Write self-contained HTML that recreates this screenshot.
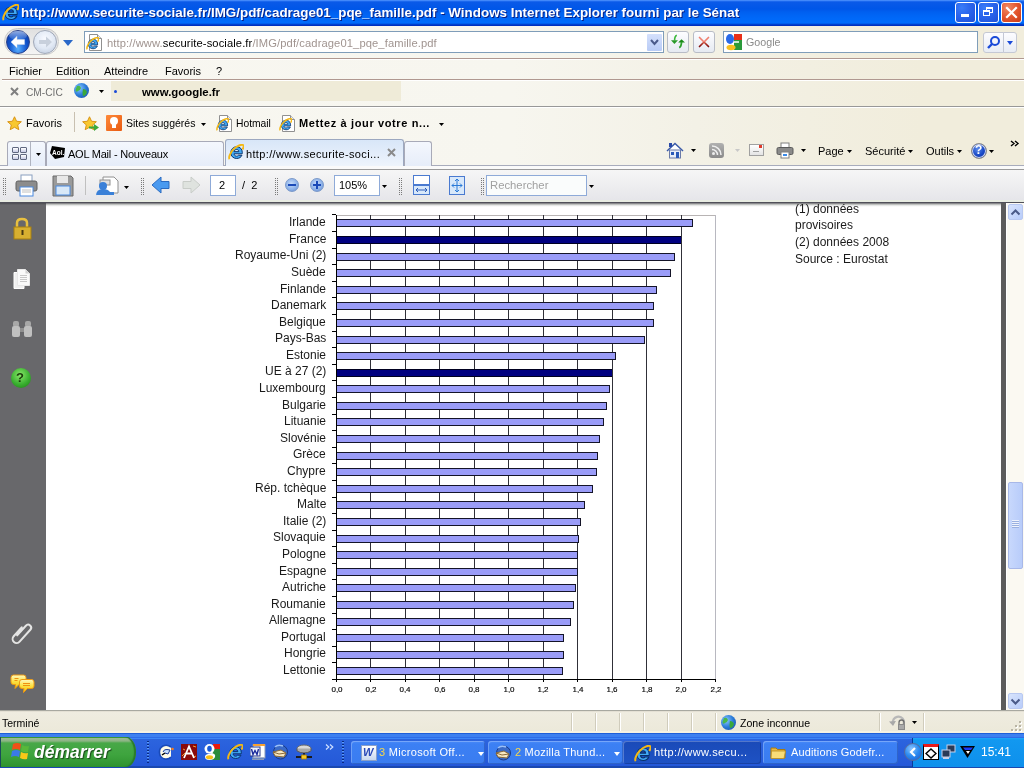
<!DOCTYPE html>
<html><head><meta charset="utf-8"><style>
*{margin:0;padding:0;box-sizing:border-box}
html,body{width:1024px;height:768px;overflow:hidden;background:#fff;font-family:"Liberation Sans",sans-serif;position:relative}
.t,.cl,.al,.note{will-change:transform}
.a{position:absolute}
.t{position:absolute;white-space:nowrap;font-size:11px;color:#000;line-height:13px}
.cl{position:absolute;right:698px;font-size:12px;line-height:16px;color:#1a1a1a;white-space:nowrap;text-align:right}
.al{position:absolute;top:685px;width:30px;text-align:center;font-size:8px;line-height:10px;color:#000;-webkit-text-stroke:0.15px #000}
.note{position:absolute;left:795px;font-size:12px;line-height:16px;color:#1a1a1a;white-space:nowrap}
</style></head><body>
<!-- title bar -->
<div class="a" style="left:0;top:0;width:1024px;height:26px;background:linear-gradient(#5a9cff 0,#2a74f4 1px,#0a5ae8 2px,#0056e8 9px,#0060f0 12px,#0068f8 18px,#006cfc 23px,#0050dc 24px,#0030c0 25px,#0030c0 26px)"></div>
<div class="t" style="left:21px;top:5px;font-size:13.4px;line-height:16px;font-weight:bold;color:#fff;text-shadow:1px 1px 0 #0a1e80">http://www.securite-sociale.fr/IMG/pdf/cadrage01_pqe_famille.pdf - Windows Internet Explorer fourni par le Sénat</div>
<!-- address row -->
<div class="a" style="left:0;top:26px;width:1024px;height:140px;background:linear-gradient(90deg,#f8f7f1 0,#f7f6ef 50%,#f3f1e6 68%,#f1eddc 90%,#f1eddc 100%)"></div>
<div class="a" style="left:0;top:58px;width:1024px;height:1px;background:#b09890"></div><div class="a" style="left:0;top:59px;width:1024px;height:1px;background:#fff"></div>
<!-- menu row -->

<div class="a" style="left:2px;top:79px;width:1022px;height:1px;background:#b09890"></div><div class="a" style="left:2px;top:80px;width:1022px;height:1px;background:#fff"></div>
<!-- links row -->

<div class="a" style="left:111px;top:81px;width:290px;height:20px;background:#efebd8"></div>
<div class="a" style="left:0;top:106px;width:1024px;height:1px;background:#989898"></div><div class="a" style="left:0;top:107px;width:1024px;height:1px;background:#fff"></div>
<!-- favorites + tabs row -->

<div class="a" style="left:0;top:165px;width:1024px;height:1px;background:#a8acbc"></div>
<div class="a" style="left:0;top:166px;width:1024px;height:3px;background:#fafafa"></div>
<div class="a" style="left:0;top:169px;width:1024px;height:1px;background:#9a9a9a"></div>
<!-- reader toolbar -->
<div class="a" style="left:0;top:170px;width:1024px;height:30px;background:linear-gradient(#f6f6f6,#e6e6ea)"></div><div class="a" style="left:0;top:200px;width:1024px;height:2px;background:#e8ece2"></div>
<div class="a" style="left:0;top:202px;width:1024px;height:1px;background:#505058"></div>
<!-- content -->
<div class="a" style="left:0;top:203px;width:46px;height:507px;background:linear-gradient(#4a4a50 0,#5a5a5e 1px,#68686b 2px)"></div>
<div class="a" style="left:46px;top:203px;width:955px;height:507px;background:linear-gradient(#6a6a70 0,#a8a8a8 1px,#d8dcd8 2px,#f4f4f4 3px,#fff 4px)"></div>
<div class="a" style="left:1001px;top:203px;width:5px;height:507px;background:#5c5c5c"></div>
<div class="a" style="left:1006px;top:203px;width:18px;height:507px;background:linear-gradient(90deg,#fff 0,#fff 1px,#fbf9f2 1px)"></div>
<!-- status bar -->
<div class="a" style="left:0;top:710px;width:1024px;height:23px;background:linear-gradient(#a8a8a0 0,#a8a8a0 1px,#e4e0d4 1px,#e4e0d4 2px,#efece0 2px,#ece9da 21px,#f6f2e2 21px)"></div>
<!-- taskbar -->
<div class="a" style="left:0;top:733px;width:1024px;height:35px;background:linear-gradient(#1f5fd8 0,#1f5fd8 1px,#3d80f0 1px,#3d80f0 4px,#2e6ce8 4px,#2e6ce8 5px,#3c86f6 5px,#3c86f6 6px,#2c64de 6px,#2458d8 33px,#1a48b0 33px)"></div>
<svg width="1024" height="768" style="position:absolute;left:0;top:0" shape-rendering="crispEdges">
<rect x="336" y="215" width="380" height="1" fill="#b8b4b4"/>
<rect x="715" y="215" width="1" height="465" fill="#b8b8c0"/>
<rect x="370" y="215" width="1" height="465" fill="#303038"/>
<rect x="405" y="215" width="1" height="465" fill="#303038"/>
<rect x="439" y="215" width="1" height="465" fill="#303038"/>
<rect x="474" y="215" width="1" height="465" fill="#303038"/>
<rect x="508" y="215" width="1" height="465" fill="#303038"/>
<rect x="543" y="215" width="1" height="465" fill="#303038"/>
<rect x="577" y="215" width="1" height="465" fill="#303038"/>
<rect x="612" y="215" width="1" height="465" fill="#303038"/>
<rect x="646" y="215" width="1" height="465" fill="#303038"/>
<rect x="681" y="215" width="1" height="465" fill="#303038"/>
<rect x="336" y="219" width="357" height="8" fill="#141428"/>
<rect x="337" y="220" width="355" height="6" fill="#9a9cf8"/>
<rect x="336" y="236" width="345" height="8" fill="#000080"/>
<rect x="336" y="236" width="345" height="1" fill="#000020"/>
<rect x="336" y="243" width="345" height="1" fill="#000020"/>
<rect x="336" y="253" width="339" height="8" fill="#141428"/>
<rect x="337" y="254" width="337" height="6" fill="#9a9cf8"/>
<rect x="336" y="269" width="335" height="8" fill="#141428"/>
<rect x="337" y="270" width="333" height="6" fill="#9a9cf8"/>
<rect x="336" y="286" width="321" height="8" fill="#141428"/>
<rect x="337" y="287" width="319" height="6" fill="#9a9cf8"/>
<rect x="336" y="302" width="318" height="8" fill="#141428"/>
<rect x="337" y="303" width="316" height="6" fill="#9a9cf8"/>
<rect x="336" y="319" width="318" height="8" fill="#141428"/>
<rect x="337" y="320" width="316" height="6" fill="#9a9cf8"/>
<rect x="336" y="336" width="309" height="8" fill="#141428"/>
<rect x="337" y="337" width="307" height="6" fill="#9a9cf8"/>
<rect x="336" y="352" width="280" height="8" fill="#141428"/>
<rect x="337" y="353" width="278" height="6" fill="#9a9cf8"/>
<rect x="336" y="369" width="276" height="8" fill="#000080"/>
<rect x="336" y="369" width="276" height="1" fill="#000020"/>
<rect x="336" y="376" width="276" height="1" fill="#000020"/>
<rect x="336" y="385" width="274" height="8" fill="#141428"/>
<rect x="337" y="386" width="272" height="6" fill="#9a9cf8"/>
<rect x="336" y="402" width="271" height="8" fill="#141428"/>
<rect x="337" y="403" width="269" height="6" fill="#9a9cf8"/>
<rect x="336" y="418" width="268" height="8" fill="#141428"/>
<rect x="337" y="419" width="266" height="6" fill="#9a9cf8"/>
<rect x="336" y="435" width="264" height="8" fill="#141428"/>
<rect x="337" y="436" width="262" height="6" fill="#9a9cf8"/>
<rect x="336" y="452" width="262" height="8" fill="#141428"/>
<rect x="337" y="453" width="260" height="6" fill="#9a9cf8"/>
<rect x="336" y="468" width="261" height="8" fill="#141428"/>
<rect x="337" y="469" width="259" height="6" fill="#9a9cf8"/>
<rect x="336" y="485" width="257" height="8" fill="#141428"/>
<rect x="337" y="486" width="255" height="6" fill="#9a9cf8"/>
<rect x="336" y="501" width="249" height="8" fill="#141428"/>
<rect x="337" y="502" width="247" height="6" fill="#9a9cf8"/>
<rect x="336" y="518" width="245" height="8" fill="#141428"/>
<rect x="337" y="519" width="243" height="6" fill="#9a9cf8"/>
<rect x="336" y="535" width="243" height="8" fill="#141428"/>
<rect x="337" y="536" width="241" height="6" fill="#9a9cf8"/>
<rect x="336" y="551" width="242" height="8" fill="#141428"/>
<rect x="337" y="552" width="240" height="6" fill="#9a9cf8"/>
<rect x="336" y="568" width="242" height="8" fill="#141428"/>
<rect x="337" y="569" width="240" height="6" fill="#9a9cf8"/>
<rect x="336" y="584" width="240" height="8" fill="#141428"/>
<rect x="337" y="585" width="238" height="6" fill="#9a9cf8"/>
<rect x="336" y="601" width="238" height="8" fill="#141428"/>
<rect x="337" y="602" width="236" height="6" fill="#9a9cf8"/>
<rect x="336" y="618" width="235" height="8" fill="#141428"/>
<rect x="337" y="619" width="233" height="6" fill="#9a9cf8"/>
<rect x="336" y="634" width="228" height="8" fill="#141428"/>
<rect x="337" y="635" width="226" height="6" fill="#9a9cf8"/>
<rect x="336" y="651" width="228" height="8" fill="#141428"/>
<rect x="337" y="652" width="226" height="6" fill="#9a9cf8"/>
<rect x="336" y="667" width="227" height="8" fill="#141428"/>
<rect x="337" y="668" width="225" height="6" fill="#9a9cf8"/>
<rect x="332" y="214" width="4" height="1" fill="#000"/>
<rect x="332" y="231" width="4" height="1" fill="#000"/>
<rect x="332" y="248" width="4" height="1" fill="#000"/>
<rect x="332" y="264" width="4" height="1" fill="#000"/>
<rect x="332" y="281" width="4" height="1" fill="#000"/>
<rect x="332" y="297" width="4" height="1" fill="#000"/>
<rect x="332" y="314" width="4" height="1" fill="#000"/>
<rect x="332" y="331" width="4" height="1" fill="#000"/>
<rect x="332" y="347" width="4" height="1" fill="#000"/>
<rect x="332" y="364" width="4" height="1" fill="#000"/>
<rect x="332" y="380" width="4" height="1" fill="#000"/>
<rect x="332" y="397" width="4" height="1" fill="#000"/>
<rect x="332" y="414" width="4" height="1" fill="#000"/>
<rect x="332" y="430" width="4" height="1" fill="#000"/>
<rect x="332" y="447" width="4" height="1" fill="#000"/>
<rect x="332" y="463" width="4" height="1" fill="#000"/>
<rect x="332" y="480" width="4" height="1" fill="#000"/>
<rect x="332" y="497" width="4" height="1" fill="#000"/>
<rect x="332" y="513" width="4" height="1" fill="#000"/>
<rect x="332" y="530" width="4" height="1" fill="#000"/>
<rect x="332" y="546" width="4" height="1" fill="#000"/>
<rect x="332" y="563" width="4" height="1" fill="#000"/>
<rect x="332" y="579" width="4" height="1" fill="#000"/>
<rect x="332" y="596" width="4" height="1" fill="#000"/>
<rect x="332" y="613" width="4" height="1" fill="#000"/>
<rect x="332" y="629" width="4" height="1" fill="#000"/>
<rect x="332" y="646" width="4" height="1" fill="#000"/>
<rect x="332" y="662" width="4" height="1" fill="#000"/>
<rect x="332" y="679" width="4" height="1" fill="#000"/>
<rect x="336" y="215" width="1" height="467" fill="#000"/>
<rect x="332" y="679" width="384" height="1" fill="#000"/>
<rect x="336" y="679" width="1" height="3" fill="#000"/>
<rect x="370" y="679" width="1" height="3" fill="#000"/>
<rect x="405" y="679" width="1" height="3" fill="#000"/>
<rect x="439" y="679" width="1" height="3" fill="#000"/>
<rect x="474" y="679" width="1" height="3" fill="#000"/>
<rect x="508" y="679" width="1" height="3" fill="#000"/>
<rect x="543" y="679" width="1" height="3" fill="#000"/>
<rect x="577" y="679" width="1" height="3" fill="#000"/>
<rect x="612" y="679" width="1" height="3" fill="#000"/>
<rect x="646" y="679" width="1" height="3" fill="#000"/>
<rect x="681" y="679" width="1" height="3" fill="#000"/>
<rect x="715" y="679" width="1" height="3" fill="#000"/>
</svg>
<div class="cl" style="top:214.1px">Irlande</div>
<div class="cl" style="top:230.7px">France</div>
<div class="cl" style="top:247.3px">Royaume-Uni (2)</div>
<div class="cl" style="top:263.9px">Suède</div>
<div class="cl" style="top:280.5px">Finlande</div>
<div class="cl" style="top:297.0px">Danemark</div>
<div class="cl" style="top:313.6px">Belgique</div>
<div class="cl" style="top:330.2px">Pays-Bas</div>
<div class="cl" style="top:346.8px">Estonie</div>
<div class="cl" style="top:363.4px">UE à 27 (2)</div>
<div class="cl" style="top:380.0px">Luxembourg</div>
<div class="cl" style="top:396.6px">Bulgarie</div>
<div class="cl" style="top:413.2px">Lituanie</div>
<div class="cl" style="top:429.8px">Slovénie</div>
<div class="cl" style="top:446.3px">Grèce</div>
<div class="cl" style="top:462.9px">Chypre</div>
<div class="cl" style="top:479.5px">Rép. tchèque</div>
<div class="cl" style="top:496.1px">Malte</div>
<div class="cl" style="top:512.7px">Italie (2)</div>
<div class="cl" style="top:529.3px">Slovaquie</div>
<div class="cl" style="top:545.9px">Pologne</div>
<div class="cl" style="top:562.5px">Espagne</div>
<div class="cl" style="top:579.1px">Autriche</div>
<div class="cl" style="top:595.6px">Roumanie</div>
<div class="cl" style="top:612.2px">Allemagne</div>
<div class="cl" style="top:628.8px">Portugal</div>
<div class="cl" style="top:645.4px">Hongrie</div>
<div class="cl" style="top:662.0px">Lettonie</div>
<div class="al" style="left:321.5px">0,0</div>
<div class="al" style="left:356.0px">0,2</div>
<div class="al" style="left:390.4px">0,4</div>
<div class="al" style="left:424.9px">0,6</div>
<div class="al" style="left:459.3px">0,8</div>
<div class="al" style="left:493.8px">1,0</div>
<div class="al" style="left:528.3px">1,2</div>
<div class="al" style="left:562.7px">1,4</div>
<div class="al" style="left:597.2px">1,6</div>
<div class="al" style="left:631.6px">1,8</div>
<div class="al" style="left:666.1px">2,0</div>
<div class="al" style="left:700.6px">2,2</div>
<svg class="a" style="left:2px;top:4px" width="17" height="17" viewBox="0 0 16 16">
<g transform="translate(8.8 8.6) scale(1.2) translate(-8.2 -8.5)"><path d="M8.2 3.6c-2.9 0-5 2.1-5 5 0 2.8 2 4.8 4.9 4.8 2.1 0 3.7-1 4.4-2.7H9.6c-.4.5-.9.8-1.6.8-1.1 0-1.9-.8-2.1-2h6.8c.1-.3.1-.7.1-1 0-2.9-1.9-4.9-4.6-4.9zM5.9 7.7c.2-1.1 1-1.8 2.1-1.8s1.8.7 1.9 1.8z" fill="#40a8f4" stroke="#08306a" stroke-width=".8"/></g>
<path d="M1.6 15.2C.4 13.8 1.8 9 5.6 5.2 9.6 1.2 14.2 0 15.2 1.2 16 2.2 15.4 4 14.4 5.6" fill="none" stroke="#f4b814" stroke-width="1.9"/>
</svg>
<div class="a" style="left:955px;top:2px;width:21px;height:21px;border:1px solid #fff;border-radius:3px;background:radial-gradient(circle at 30% 25%,#3a7cf8 0,#2a64ec 45%,#1c50d8 100%)"></div>
<div class="a" style="left:978px;top:2px;width:21px;height:21px;border:1px solid #fff;border-radius:3px;background:radial-gradient(circle at 30% 25%,#3a7cf8 0,#2a64ec 45%,#1c50d8 100%)"></div>
<div class="a" style="left:1001px;top:2px;width:21px;height:21px;border:1px solid #fff;border-radius:3px;background:radial-gradient(circle at 30% 25%,#f08a66 0,#e4562e 50%,#c83c18 100%)"></div>
<div class="a" style="left:961px;top:14px;width:8px;height:3px;background:#fff"></div>
<div class="a" style="left:986px;top:7px;width:7px;height:6px;border:1px solid #fff;border-top-width:2px"></div>
<div class="a" style="left:983px;top:10px;width:7px;height:6px;border:1px solid #fff;border-top-width:2px;background:#2a64ec"></div>
<svg class="a" style="left:1005px;top:6px" width="13" height="13"><path d="M2 2L11 11M11 2L2 11" stroke="#fff" stroke-width="2.2" stroke-linecap="square"/></svg>
<div class="a" style="left:4px;top:28px;width:55px;height:27px;border-radius:14px;background:linear-gradient(#e0e0e0,#f4f4f4);border:1px solid #c8c8c8"></div>
<div class="a" style="left:6px;top:30px;width:24px;height:24px;border-radius:50%;background:radial-gradient(ellipse at 50% 80%,#5ab0ff 0,#2a74e0 35%,#1050c8 60%,#0a3aa0 100%);border:1px solid #28408a"></div>
<div class="a" style="left:9px;top:31px;width:18px;height:9px;border-radius:50%;background:linear-gradient(rgba(255,255,255,.55),rgba(255,255,255,.05))"></div>
<svg class="a" style="left:10px;top:35px" width="16" height="14"><path d="M1 7L7 1.2V4.6H14.5V9.4H7V12.8Z" fill="#fff" stroke="#d0d8e8" stroke-width=".5"/></svg>
<div class="a" style="left:33px;top:30px;width:24px;height:24px;border-radius:50%;background:radial-gradient(circle at 50% 35%,#f8faff 0,#e0e8f4 55%,#b8c4d8 100%);border:1px solid #a0a8b8"></div>
<svg class="a" style="left:37px;top:35px" width="16" height="14"><path d="M15 7L9 1.5V5H2V9H9V12.5Z" fill="#c8d0dc"/></svg>
<svg class="a" style="left:63px;top:40px" width="10" height="6"><path d="M0 0h10L5 6z" fill="#2a68c8"/></svg>
<div class="a" style="left:84px;top:31px;width:580px;height:22px;background:#fff;border:1px solid #7f9db9"></div>
<svg class="a" style="left:88px;top:34px" width="14" height="17"><path d="M1.5 .5H9.5L13.5 4.5V16.5H1.5z" fill="#fff" stroke="#909090"/><path d="M9.5 .5V4.5H13.5" fill="#e8e8e8" stroke="#909090"/></svg><svg class="a" style="left:86px;top:37px" width="13" height="13" viewBox="0 0 16 16">
<g transform="translate(8.8 8.6) scale(1.2) translate(-8.2 -8.5)"><path d="M8.2 3.6c-2.9 0-5 2.1-5 5 0 2.8 2 4.8 4.9 4.8 2.1 0 3.7-1 4.4-2.7H9.6c-.4.5-.9.8-1.6.8-1.1 0-1.9-.8-2.1-2h6.8c.1-.3.1-.7.1-1 0-2.9-1.9-4.9-4.6-4.9zM5.9 7.7c.2-1.1 1-1.8 2.1-1.8s1.8.7 1.9 1.8z" fill="#40a8f4" stroke="#08306a" stroke-width=".8"/></g>
<path d="M1.6 15.2C.4 13.8 1.8 9 5.6 5.2 9.6 1.2 14.2 0 15.2 1.2 16 2.2 15.4 4 14.4 5.6" fill="none" stroke="#f4b814" stroke-width="1.9"/>
</svg>
<div class="t" style="left:107px;top:37px;font-size:11.2px;letter-spacing:0.1px;color:#a09490">http://www.<span style="color:#000">securite-sociale.fr</span>/IMG/pdf/cadrage01_pqe_famille.pdf</div>
<div class="a" style="left:647px;top:34px;width:15px;height:17px;background:linear-gradient(#d4e0fc,#b8cbf6);border-radius:1px"></div>
<svg class="a" style="left:650px;top:39px" width="9" height="7"><path d="M1 1L4.5 5L8 1" stroke="#4a5a8a" stroke-width="2" fill="none"/></svg>
<div class="a" style="left:667px;top:31px;width:22px;height:22px;border:1px solid #b8bcc6;border-radius:3px;background:linear-gradient(#fdfdff,#e6eaf2)"></div>
<div class="a" style="left:693px;top:31px;width:22px;height:22px;border:1px solid #b8bcc6;border-radius:3px;background:linear-gradient(#fdfdff,#e6eaf2)"></div>
<svg class="a" style="left:670px;top:34px" width="16" height="16"><path d="M6.8 1.2Q4.6 2 4.6 6.5" stroke="#3ab83a" stroke-width="1.6" fill="none"/><path d="M1 6.3H8L4.4 10z" fill="#2a9a2a"/><path d="M8.2 8.6H15L11.5 5.2z" fill="#1a8a1a"/><path d="M11.5 8Q11.4 12.6 9.2 13.6" stroke="#2aa02a" stroke-width="1.8" fill="none"/></svg>
<svg class="a" style="left:698px;top:36px" width="12" height="12"><defs><linearGradient id="stg" x1="0" y1="0" x2="0" y2="1"><stop offset=".45" stop-color="#f08070"/><stop offset=".6" stop-color="#c04030"/><stop offset="1" stop-color="#801010"/></linearGradient></defs><path d="M1.5 1.5L10.5 10.5M10.5 1.5L1.5 10.5" stroke="url(#stg)" stroke-width="1.7" stroke-linecap="round"/></svg>
<div class="a" style="left:723px;top:31px;width:255px;height:22px;background:#fff;border:1px solid #7f9db9"></div>
<svg class="a" style="left:725px;top:33px" width="18" height="18"><rect x="9" y="1" width="8" height="7" fill="#e8301a"/><rect x="9" y="7" width="8" height="10" fill="#2a9a3a"/><ellipse cx="5" cy="6" rx="4" ry="5" fill="#2a6ae8"/><ellipse cx="6" cy="14.5" rx="4.5" ry="2.8" fill="#f8c020"/><path d="M9 9h5" stroke="#fff" stroke-width="1.5"/></svg>
<div class="t" style="left:746px;top:36px;font-size:10.7px;color:#8a8a8a">Google</div>
<div class="a" style="left:983px;top:32px;width:21px;height:21px;border:1px solid #c4c8d4;border-radius:3px 0 0 3px;background:linear-gradient(#fcfcff,#e8ecf4)"></div>
<div class="a" style="left:1003px;top:32px;width:14px;height:21px;border:1px solid #c4c8d4;border-radius:0 3px 3px 0;background:linear-gradient(#fcfcff,#e8ecf4)"></div>
<svg class="a" style="left:986px;top:35px" width="15" height="15"><circle cx="9" cy="6" r="4" stroke="#1a4ad8" stroke-width="2" fill="none"/><path d="M6 9L2 13" stroke="#1a4ad8" stroke-width="2.4"/></svg>
<svg class="a" style="left:1007px;top:41px" width="6" height="4"><path d="M0 0h6L3 4z" fill="#1a4ad8"/></svg>
<div class="t" style="left:9px;top:65px;font-size:11px">Fichier</div>
<div class="t" style="left:56px;top:65px;font-size:11px">Edition</div>
<div class="t" style="left:104px;top:65px;font-size:11px">Atteindre</div>
<div class="t" style="left:165px;top:65px;font-size:11px">Favoris</div>
<div class="t" style="left:216px;top:65px;font-size:11px">?</div>
<svg class="a" style="left:10px;top:87px" width="9" height="9"><path d="M1 1L8 8M8 1L1 8" stroke="#808080" stroke-width="2"/></svg>
<div class="t" style="left:26px;top:86px;font-size:10.2px;color:#707070">CM-CIC</div>
<div class="a" style="left:74px;top:83px;width:15px;height:15px;border-radius:50%;background:radial-gradient(circle at 35% 35%,#8ac8ff 0,#2a7ad8 50%,#1a4a98 100%)"></div>
<svg class="a" style="left:74px;top:83px" width="15" height="15"><path d="M3 3Q6 2 7 5Q6 8 4 8Q2 10 1.5 7z" fill="#4ab84a"/><path d="M9 6Q12 6 13 9Q12 13 9 13Q8 10 9 6z" fill="#3aa83a"/></svg>
<svg class="a" style="left:99px;top:90px" width="5" height="3"><path d="M0 0h5L2.5 3z" fill="#000"/></svg>
<div class="a" style="left:114px;top:90px;width:3px;height:3px;border-radius:50%;background:#1a4ad8"></div>
<div class="t" style="left:142px;top:86px;font-size:11.4px;font-weight:bold">www.google.fr</div>
<svg class="a" style="left:7px;top:116px" width="15" height="15" viewBox="0 0 16 16"><path d="M8 .8L10.2 5.6L15.3 6.1L11.4 9.5L12.6 14.6L8 12L3.4 14.6L4.6 9.5L.7 6.1L5.8 5.6Z" fill="#f8c830" stroke="#d89010" stroke-width="1"/></svg>
<div class="t" style="left:26px;top:117px;font-size:11px">Favoris</div>
<div class="a" style="left:74px;top:112px;width:1px;height:20px;background:#c8c0b0"></div>
<svg class="a" style="left:82px;top:116px" width="15" height="15" viewBox="0 0 16 16"><path d="M8 .8L10.2 5.6L15.3 6.1L11.4 9.5L12.6 14.6L8 12L3.4 14.6L4.6 9.5L.7 6.1L5.8 5.6Z" fill="#f8c830" stroke="#d89010" stroke-width="1"/></svg>
<svg class="a" style="left:89px;top:124px" width="10" height="7"><path d="M0 2.5h5V0l5 3.5-5 3.5V4.5H0z" fill="#3aa83a"/></svg>
<div class="a" style="left:106px;top:115px;width:16px;height:16px;background:linear-gradient(135deg,#ff8a3a,#e85a10);border-radius:1px"></div>
<div class="a" style="left:110px;top:117px;width:8px;height:8px;border-radius:50%;background:#fff"></div>
<div class="a" style="left:112px;top:124px;width:4px;height:4px;background:#fff"></div>
<div class="t" style="left:126px;top:117px;font-size:10.5px">Sites suggérés</div>
<svg class="a" style="left:201px;top:123px" width="5" height="3"><path d="M0 0h5L2.5 3z" fill="#000"/></svg>
<svg class="a" style="left:218px;top:115px" width="14" height="17"><path d="M1.5 .5H9.5L13.5 4.5V16.5H1.5z" fill="#fff" stroke="#909090"/><path d="M9.5 .5V4.5H13.5" fill="#e8e8e8" stroke="#909090"/></svg><svg class="a" style="left:216px;top:118px" width="13" height="13" viewBox="0 0 16 16">
<g transform="translate(8.8 8.6) scale(1.2) translate(-8.2 -8.5)"><path d="M8.2 3.6c-2.9 0-5 2.1-5 5 0 2.8 2 4.8 4.9 4.8 2.1 0 3.7-1 4.4-2.7H9.6c-.4.5-.9.8-1.6.8-1.1 0-1.9-.8-2.1-2h6.8c.1-.3.1-.7.1-1 0-2.9-1.9-4.9-4.6-4.9zM5.9 7.7c.2-1.1 1-1.8 2.1-1.8s1.8.7 1.9 1.8z" fill="#40a8f4" stroke="#08306a" stroke-width=".8"/></g>
<path d="M1.6 15.2C.4 13.8 1.8 9 5.6 5.2 9.6 1.2 14.2 0 15.2 1.2 16 2.2 15.4 4 14.4 5.6" fill="none" stroke="#f4b814" stroke-width="1.9"/>
</svg>
<div class="t" style="left:236px;top:117px;font-size:10.3px">Hotmail</div>
<svg class="a" style="left:281px;top:115px" width="14" height="17"><path d="M1.5 .5H9.5L13.5 4.5V16.5H1.5z" fill="#fff" stroke="#909090"/><path d="M9.5 .5V4.5H13.5" fill="#e8e8e8" stroke="#909090"/></svg><svg class="a" style="left:279px;top:118px" width="13" height="13" viewBox="0 0 16 16">
<g transform="translate(8.8 8.6) scale(1.2) translate(-8.2 -8.5)"><path d="M8.2 3.6c-2.9 0-5 2.1-5 5 0 2.8 2 4.8 4.9 4.8 2.1 0 3.7-1 4.4-2.7H9.6c-.4.5-.9.8-1.6.8-1.1 0-1.9-.8-2.1-2h6.8c.1-.3.1-.7.1-1 0-2.9-1.9-4.9-4.6-4.9zM5.9 7.7c.2-1.1 1-1.8 2.1-1.8s1.8.7 1.9 1.8z" fill="#40a8f4" stroke="#08306a" stroke-width=".8"/></g>
<path d="M1.6 15.2C.4 13.8 1.8 9 5.6 5.2 9.6 1.2 14.2 0 15.2 1.2 16 2.2 15.4 4 14.4 5.6" fill="none" stroke="#f4b814" stroke-width="1.9"/>
</svg>
<div class="t" style="left:299px;top:117px;font-size:11px;font-weight:bold;letter-spacing:0.62px">Mettez à jour votre n...</div>
<svg class="a" style="left:439px;top:123px" width="5" height="3"><path d="M0 0h5L2.5 3z" fill="#000"/></svg>
<div class="a" style="left:7px;top:141px;width:39px;height:25px;border:1px solid #a8aab8;border-bottom:none;border-radius:3px 3px 0 0;background:linear-gradient(#f4f7fd,#e6edf9)"></div>
<div class="a" style="left:30px;top:142px;width:1px;height:24px;background:#b0b4c0"></div>
<div class="a" style="left:12px;top:147px;width:7px;height:6px;border:1px solid #606880;border-radius:1px;background:linear-gradient(#fff,#c8cce8)"></div>
<div class="a" style="left:20px;top:147px;width:7px;height:6px;border:1px solid #606880;border-radius:1px;background:linear-gradient(#fff,#c8cce8)"></div>
<div class="a" style="left:12px;top:154px;width:7px;height:6px;border:1px solid #606880;border-radius:1px;background:linear-gradient(#fff,#c8cce8)"></div>
<div class="a" style="left:20px;top:154px;width:7px;height:6px;border:1px solid #606880;border-radius:1px;background:linear-gradient(#fff,#c8cce8)"></div>
<svg class="a" style="left:36px;top:153px" width="5" height="3"><path d="M0 0h5L2.5 3z" fill="#000"/></svg>
<div class="a" style="left:46px;top:141px;width:178px;height:25px;border:1px solid #a8aab8;border-bottom:none;border-radius:3px 3px 0 0;background:linear-gradient(#f4f7fd,#e6edf9)"></div>
<svg class="a" style="left:49px;top:145px" width="17" height="15"><path d="M3 1L16 3L15 12L6 14L1 8Z" fill="#000"/><text x="3" y="10" font-size="6.5" font-weight="bold" fill="#fff" font-family="Liberation Sans">Aol.</text></svg>
<div class="t" style="left:68px;top:148px;font-size:11px;letter-spacing:-0.22px">AOL Mail - Nouveaux</div>
<div class="a" style="left:225px;top:139px;width:179px;height:27px;border:1px solid #9ca8c0;border-bottom:none;border-radius:3px 3px 0 0;background:linear-gradient(#d8e6f8,#eef4fc)"></div>
<svg class="a" style="left:228px;top:144px" width="16" height="16" viewBox="0 0 16 16">
<g transform="translate(8.8 8.6) scale(1.2) translate(-8.2 -8.5)"><path d="M8.2 3.6c-2.9 0-5 2.1-5 5 0 2.8 2 4.8 4.9 4.8 2.1 0 3.7-1 4.4-2.7H9.6c-.4.5-.9.8-1.6.8-1.1 0-1.9-.8-2.1-2h6.8c.1-.3.1-.7.1-1 0-2.9-1.9-4.9-4.6-4.9zM5.9 7.7c.2-1.1 1-1.8 2.1-1.8s1.8.7 1.9 1.8z" fill="#40a8f4" stroke="#08306a" stroke-width=".8"/></g>
<path d="M1.6 15.2C.4 13.8 1.8 9 5.6 5.2 9.6 1.2 14.2 0 15.2 1.2 16 2.2 15.4 4 14.4 5.6" fill="none" stroke="#f4b814" stroke-width="1.9"/>
</svg>
<div class="t" style="left:246px;top:148px;font-size:11px;letter-spacing:0.35px">http://www.securite-soci...</div>
<svg class="a" style="left:387px;top:148px" width="9" height="9"><path d="M1 1L8 8M8 1L1 8" stroke="#8a8a8a" stroke-width="2"/></svg>
<div class="a" style="left:404px;top:141px;width:28px;height:25px;border:1px solid #a8aab8;border-bottom:none;border-radius:3px 3px 0 0;background:linear-gradient(#f4f7fd,#e6edf9)"></div>
<svg class="a" style="left:666px;top:142px" width="18" height="17"><path d="M1 9L9 1.5L17 9" fill="#fff" stroke="#3a5aa8" stroke-width="1.5"/><rect x="3.5" y="8" width="11" height="8" fill="#e8eef8" stroke="#6a7aa8"/><rect x="10" y="10" width="3" height="6" fill="#2a5ab8"/><rect x="5" y="10" width="3" height="3" fill="#2a5ab8"/><rect x="3" y="1" width="3" height="4" fill="#2a4aa8"/></svg>
<svg class="a" style="left:691px;top:149px" width="5" height="3"><path d="M0 0h5L2.5 3z" fill="#000"/></svg>
<div class="a" style="left:709px;top:143px;width:15px;height:15px;border-radius:3px;background:linear-gradient(#b0b0b0,#8a8a8a)"></div>
<svg class="a" style="left:711px;top:145px" width="11" height="11"><circle cx="2.5" cy="8.5" r="1.5" fill="#eee"/><path d="M1 4.5A5.5 5.5 0 0 1 6.5 10M1 1A9 9 0 0 1 10 10" stroke="#eee" stroke-width="1.5" fill="none"/></svg>
<svg class="a" style="left:735px;top:149px" width="5" height="3"><path d="M0 0h5L2.5 3z" fill="#c8c8c8"/></svg>
<div class="a" style="left:749px;top:144px;width:15px;height:12px;border:1px solid #a0a0a0;background:linear-gradient(#fff,#e4e4e4)"></div>
<div class="a" style="left:759px;top:145px;width:3px;height:3px;background:#e03a2a"></div>
<div class="a" style="left:753px;top:151px;width:6px;height:1px;background:#a0a0a0"></div>
<svg class="a" style="left:776px;top:142px" width="18" height="17"><rect x="5" y="1" width="8" height="5" fill="#fff" stroke="#808080"/><rect x="1" y="5.5" width="16" height="7" rx="1.5" fill="#8a8a8a" stroke="#5a5a5a"/><rect x="5" y="10" width="8" height="6" fill="#fff" stroke="#808080"/><rect x="7" y="12" width="4" height="2" fill="#3a8ae8"/></svg>
<svg class="a" style="left:801px;top:149px" width="5" height="3"><path d="M0 0h5L2.5 3z" fill="#000"/></svg>
<div class="t" style="left:818px;top:145px;font-size:11px">Page</div>
<div class="t" style="left:865px;top:145px;font-size:11px">Sécurité</div>
<div class="t" style="left:926px;top:145px;font-size:11px">Outils</div>
<svg class="a" style="left:847px;top:150px" width="5" height="3"><path d="M0 0h5L2.5 3z" fill="#000"/></svg>
<svg class="a" style="left:908px;top:150px" width="5" height="3"><path d="M0 0h5L2.5 3z" fill="#000"/></svg>
<svg class="a" style="left:957px;top:150px" width="5" height="3"><path d="M0 0h5L2.5 3z" fill="#000"/></svg>
<div class="a" style="left:971px;top:143px;width:16px;height:16px;border-radius:50%;background:radial-gradient(circle at 40% 35%,#5a8ae8 0,#1a4ac8 50%,#0a2a98 100%);border:1px solid #888;box-shadow:inset 0 0 0 1px #d0d8f0"></div>
<div class="t" style="left:975px;top:144px;font-size:12px;font-weight:bold;color:#fff">?</div>
<svg class="a" style="left:989px;top:150px" width="5" height="3"><path d="M0 0h5L2.5 3z" fill="#000"/></svg>
<svg class="a" style="left:1010px;top:140px" width="10" height="7"><path d="M1 1L4 3.5L1 6M5 1L8 3.5L5 6" stroke="#000" stroke-width="1.4" fill="none"/></svg>
<div class="a" style="left:3px;top:178px;width:3px;height:17px;background:repeating-linear-gradient(90deg,#7a7a7a 0,#7a7a7a 1px,transparent 1px,transparent 2px),transparent;-webkit-mask:repeating-linear-gradient(#000 0,#000 1px,transparent 1px,transparent 2px);mask:repeating-linear-gradient(#000 0,#000 1px,transparent 1px,transparent 2px)"></div>
<div class="a" style="left:141px;top:178px;width:3px;height:17px;background:repeating-linear-gradient(90deg,#7a7a7a 0,#7a7a7a 1px,transparent 1px,transparent 2px),transparent;-webkit-mask:repeating-linear-gradient(#000 0,#000 1px,transparent 1px,transparent 2px);mask:repeating-linear-gradient(#000 0,#000 1px,transparent 1px,transparent 2px)"></div>
<div class="a" style="left:275px;top:178px;width:3px;height:17px;background:repeating-linear-gradient(90deg,#7a7a7a 0,#7a7a7a 1px,transparent 1px,transparent 2px),transparent;-webkit-mask:repeating-linear-gradient(#000 0,#000 1px,transparent 1px,transparent 2px);mask:repeating-linear-gradient(#000 0,#000 1px,transparent 1px,transparent 2px)"></div>
<div class="a" style="left:399px;top:178px;width:3px;height:17px;background:repeating-linear-gradient(90deg,#7a7a7a 0,#7a7a7a 1px,transparent 1px,transparent 2px),transparent;-webkit-mask:repeating-linear-gradient(#000 0,#000 1px,transparent 1px,transparent 2px);mask:repeating-linear-gradient(#000 0,#000 1px,transparent 1px,transparent 2px)"></div>
<div class="a" style="left:481px;top:178px;width:3px;height:17px;background:repeating-linear-gradient(90deg,#7a7a7a 0,#7a7a7a 1px,transparent 1px,transparent 2px),transparent;-webkit-mask:repeating-linear-gradient(#000 0,#000 1px,transparent 1px,transparent 2px);mask:repeating-linear-gradient(#000 0,#000 1px,transparent 1px,transparent 2px)"></div>
<div class="a" style="left:85px;top:176px;width:1px;height:19px;background:#c0c0c0"></div>
<svg class="a" style="left:15px;top:174px" width="23" height="23"><rect x="6" y="1" width="11" height="7" fill="#fff" stroke="#8aa0c0"/><rect x="1" y="7" width="21" height="10" rx="2" fill="#8c8c8c" stroke="#606060"/><rect x="5" y="13" width="13" height="9" fill="#fff" stroke="#4a8ae0"/><path d="M7 16h9M7 18h9" stroke="#c0c0c0"/></svg>
<svg class="a" style="left:52px;top:175px" width="22" height="22"><path d="M1 1h18l2 2v18H1z" fill="#9a9a9a" stroke="#6a6a6a"/><rect x="5" y="1" width="11" height="7" fill="#e8e8e8"/><rect x="4" y="11" width="14" height="9" fill="#d8e8f8" stroke="#4a8ae0"/></svg>
<svg class="a" style="left:95px;top:174px" width="24" height="23"><path d="M8 3h11l4 4v12H8z" fill="#fff" stroke="#909090"/><rect x="5" y="6" width="10" height="5" fill="#e0e0e0" stroke="#909090"/><circle cx="8" cy="12" r="4" fill="#3a80d8"/><path d="M1 22Q1 15 8 15Q13 15 15 18H19V21H1z" fill="#3a80d8"/></svg>
<svg class="a" style="left:124px;top:186px" width="5" height="3"><path d="M0 0h5L2.5 3z" fill="#000"/></svg>
<svg class="a" style="left:151px;top:176px" width="19" height="18"><path d="M1 9L10 1V5.5H18V12.5H10V17Z" fill="#4a9af0" stroke="#2a6ac0"/></svg>
<svg class="a" style="left:182px;top:176px" width="19" height="18"><path d="M18 9L9 1V5.5H1V12.5H9V17Z" fill="#dfe3df" stroke="#c8ccc8"/></svg>
<div class="a" style="left:210px;top:175px;width:26px;height:21px;background:#fff;border:1px solid #8eaad8"></div>
<div class="t" style="left:219px;top:179px;font-size:11px">2</div>
<div class="t" style="left:242px;top:179px;font-size:11px">/&nbsp;&nbsp;2</div>
<div class="a" style="left:285px;top:178px;width:14px;height:14px;border-radius:50%;background:radial-gradient(circle at 45% 40%,#c8dcfa 0,#8ab0e8 60%,#5a80c8 100%);border:1px solid #7a98c8"></div>
<div class="a" style="left:310px;top:178px;width:14px;height:14px;border-radius:50%;background:radial-gradient(circle at 45% 40%,#c8dcfa 0,#8ab0e8 60%,#5a80c8 100%);border:1px solid #7a98c8"></div>
<div class="a" style="left:288px;top:184px;width:8px;height:2px;background:#1a4ab8"></div>
<div class="a" style="left:313px;top:184px;width:8px;height:2px;background:#1a4ab8"></div>
<div class="a" style="left:316px;top:181px;width:2px;height:8px;background:#1a4ab8"></div>
<div class="a" style="left:334px;top:175px;width:46px;height:21px;background:#fff;border:1px solid #8eaad8"></div>
<div class="t" style="left:339px;top:179px;font-size:11px">105%</div>
<svg class="a" style="left:382px;top:185px" width="5" height="3"><path d="M0 0h5L2.5 3z" fill="#000"/></svg>
<svg class="a" style="left:413px;top:175px" width="17" height="21"><rect x=".5" y=".5" width="16" height="9" fill="#fff" stroke="#4a7ad0"/><rect x=".5" y="10.5" width="16" height="9" fill="#d8e8fa" stroke="#4a7ad0"/><path d="M3 15h11M3 15l2-2M3 15l2 2M14 15l-2-2M14 15l-2 2" stroke="#2a5ab8"/></svg>
<svg class="a" style="left:449px;top:176px" width="16" height="19"><rect x=".5" y=".5" width="15" height="18" fill="#d8e8fa" stroke="#4a7ad0"/><path d="M8 3v13M3 9.5h10M8 3l-2 2M8 3l2 2M8 16l-2-2M8 16l2-2M3 9.5l2-2M3 9.5l2 2M13 9.5l-2-2M13 9.5l-2 2" stroke="#2a7ad8"/></svg>
<div class="a" style="left:486px;top:175px;width:101px;height:21px;background:#fafcfc;border:1px solid #8eaad8"></div>
<div class="t" style="left:490px;top:179px;font-size:11.3px;color:#a0a0a0">Rechercher</div>
<svg class="a" style="left:589px;top:185px" width="5" height="3"><path d="M0 0h5L2.5 3z" fill="#000"/></svg>
<svg class="a" style="left:12px;top:217px" width="20" height="23"><path d="M5 10V6Q5 2 10 2Q15 2 15 6V10" stroke="#e8c040" stroke-width="2.5" fill="none"/><rect x="2" y="10" width="17" height="12" fill="#d8b030" stroke="#a88010"/><rect x="9.5" y="13" width="2" height="5" fill="#4a3a10"/></svg>
<svg class="a" style="left:13px;top:268px" width="18" height="22"><path d="M1 4.5h10v16H1z" fill="#f0f0f0" stroke="#fff"/><path d="M4.5 1.5H12.5L16.5 5.5V17.5H4.5z" fill="#fafafa" stroke="#e8e8e8"/><path d="M12.5 1.5V5.5H16.5" fill="#d0d0d0"/><path d="M7 7.5h7M7 9.5h7M7 11.5h7M7 13.5h7" stroke="#c8c8c8"/></svg>
<svg class="a" style="left:11px;top:320px" width="22" height="18"><rect x="2" y="1" width="6" height="6" rx="2" fill="#a8a8a8"/><rect x="14" y="1" width="6" height="6" rx="2" fill="#a8a8a8"/><rect x="1" y="6" width="8" height="11" rx="2" fill="#c0c0c0"/><rect x="13" y="6" width="8" height="11" rx="2" fill="#c0c0c0"/><rect x="9" y="8" width="4" height="4" fill="#909090"/></svg>
<div class="a" style="left:11px;top:368px;width:20px;height:20px;border-radius:50%;background:radial-gradient(circle at 45% 35%,#8ae86a 0,#3ab030 55%,#1a7a10 100%)"></div>
<div class="t" style="left:16px;top:371px;font-size:13px;font-weight:bold;color:#1a3a0a">?</div>
<svg class="a" style="left:10px;top:620px" width="24" height="26"><g transform="rotate(42 12 13)"><path d="M8 9V21A4 4 0 0 0 16 21V5A3 3 0 0 0 10 5V18" stroke="#6a6a6a" stroke-width="3.6" fill="none" stroke-linecap="round"/><path d="M8 9V21A4 4 0 0 0 16 21V5A3 3 0 0 0 10 5V18" stroke="#e4e4e4" stroke-width="2" fill="none" stroke-linecap="round"/></g></svg>
<svg class="a" style="left:10px;top:674px" width="25" height="20"><defs><linearGradient id="bub" x1="0" y1="0" x2="0" y2="1"><stop offset="0" stop-color="#fffac0"/><stop offset=".5" stop-color="#fce040"/><stop offset="1" stop-color="#f4c010"/></linearGradient></defs><path d="M3.5 1H13.5A2.5 2.5 0 0 1 16 3.5V8A2.5 2.5 0 0 1 13.5 10.5H9L5 14.5L5.5 10.5H3.5A2.5 2.5 0 0 1 1 8V3.5A2.5 2.5 0 0 1 3.5 1z" fill="url(#bub)" stroke="#f09a10"/><path d="M12 5.5H21.5A2.5 2.5 0 0 1 24 8V12A2.5 2.5 0 0 1 21.5 14.5H17.5L13.5 18.5L14 14.5H12A2.5 2.5 0 0 1 9.5 12V8A2.5 2.5 0 0 1 12 5.5z" fill="url(#bub)" stroke="#f09a10"/><path d="M4.5 4.5h4M4.5 6.5h3M13 9.5h7M13 11.5h7" stroke="#f09010" stroke-width="1"/></svg>
<div class="a" style="left:1008px;top:204px;width:15px;height:16px;border-radius:2px;border:1px solid #b8c8f0;background:linear-gradient(135deg,#d8e4fc,#b8ccfa)"></div>
<svg class="a" style="left:1010px;top:208px" width="11" height="8"><path d="M1.5 6.5L5.5 2.5L9.5 6.5" stroke="#4a5a88" stroke-width="2" fill="none"/></svg>
<div class="a" style="left:1008px;top:482px;width:15px;height:87px;border-radius:2px;border:1px solid #a8b8e8;background:linear-gradient(90deg,#c8d8fc,#b8ccfa)"></div>
<div class="a" style="left:1012px;top:520px;width:7px;height:8px;background:repeating-linear-gradient(#eef2fc 0,#eef2fc 1px,#9ab0e0 1px,#9ab0e0 2px)"></div>
<div class="a" style="left:1008px;top:693px;width:15px;height:16px;border-radius:2px;border:1px solid #b8c8f0;background:linear-gradient(135deg,#d8e4fc,#b8ccfa)"></div>
<svg class="a" style="left:1010px;top:698px" width="11" height="8"><path d="M1.5 1.5L5.5 5.5L9.5 1.5" stroke="#4a5a88" stroke-width="2" fill="none"/></svg>
<div class="t" style="left:2px;top:717px;font-size:10.5px">Terminé</div>
<div class="a" style="left:571px;top:713px;width:1px;height:18px;background:#d0ccbc;box-shadow:1px 0 0 #fff"></div>
<div class="a" style="left:595px;top:713px;width:1px;height:18px;background:#d0ccbc;box-shadow:1px 0 0 #fff"></div>
<div class="a" style="left:619px;top:713px;width:1px;height:18px;background:#d0ccbc;box-shadow:1px 0 0 #fff"></div>
<div class="a" style="left:643px;top:713px;width:1px;height:18px;background:#d0ccbc;box-shadow:1px 0 0 #fff"></div>
<div class="a" style="left:667px;top:713px;width:1px;height:18px;background:#d0ccbc;box-shadow:1px 0 0 #fff"></div>
<div class="a" style="left:691px;top:713px;width:1px;height:18px;background:#d0ccbc;box-shadow:1px 0 0 #fff"></div>
<div class="a" style="left:715px;top:713px;width:1px;height:18px;background:#d0ccbc;box-shadow:1px 0 0 #fff"></div>
<div class="a" style="left:879px;top:713px;width:1px;height:18px;background:#d0ccbc;box-shadow:1px 0 0 #fff"></div>
<div class="a" style="left:923px;top:713px;width:1px;height:18px;background:#d0ccbc;box-shadow:1px 0 0 #fff"></div>
<div class="a" style="left:721px;top:715px;width:15px;height:15px;border-radius:50%;background:radial-gradient(circle at 35% 35%,#8ac8ff 0,#2a7ad8 50%,#1a4a98 100%)"></div>
<svg class="a" style="left:721px;top:715px" width="15" height="15"><path d="M3 3Q6 2 7 5Q6 8 4 8Q2 10 1.5 7z" fill="#4ab84a"/><path d="M9 6Q12 6 13 9Q12 13 9 13Q8 10 9 6z" fill="#3aa83a"/></svg>
<div class="t" style="left:740px;top:717px;font-size:10.6px">Zone inconnue</div>
<svg class="a" style="left:889px;top:714px" width="18" height="17"><path d="M4 9A5.5 5.5 0 1 1 12 13" stroke="#b8b8b8" stroke-width="2.4" fill="none"/><path d="M0 7.5L4 12L7 7z" fill="#a8a8a8"/><path d="M10 10V8.5A2.5 2.5 0 0 1 15 8.5V10" stroke="#707070" stroke-width="1.3" fill="none"/><rect x="9" y="10" width="7" height="6" fill="#8a8a8a"/><path d="M10 12h5M10 14h5" stroke="#c8c8c8"/></svg>
<div class="a" style="left:1019px;top:721px;width:2px;height:2px;background:#b8b4a4;box-shadow:1px 1px 0 #fff"></div>
<div class="a" style="left:1015px;top:725px;width:2px;height:2px;background:#b8b4a4;box-shadow:1px 1px 0 #fff"></div>
<div class="a" style="left:1019px;top:725px;width:2px;height:2px;background:#b8b4a4;box-shadow:1px 1px 0 #fff"></div>
<div class="a" style="left:1011px;top:729px;width:2px;height:2px;background:#b8b4a4;box-shadow:1px 1px 0 #fff"></div>
<div class="a" style="left:1015px;top:729px;width:2px;height:2px;background:#b8b4a4;box-shadow:1px 1px 0 #fff"></div>
<div class="a" style="left:1019px;top:729px;width:2px;height:2px;background:#b8b4a4;box-shadow:1px 1px 0 #fff"></div>
<svg class="a" style="left:912px;top:721px" width="5" height="3"><path d="M0 0h5L2.5 3z" fill="#000"/></svg>
<div class="a" style="left:0;top:737px;width:136px;height:30px;border-radius:0 10px 10px 0/0 15px 15px 0;background:linear-gradient(#3a9a3a 0,#3a9a3a 1px,#9cbc94 1px,#8cb484 4px,#48a848 6px,#3ea43e 60%,#2e922e 100%);box-shadow:inset -2px 0 1px #2a7a2a,inset 1px 0 0 #1a4a5a"></div>
<svg class="a" style="left:10px;top:742px" width="20" height="19"><path d="M3 2Q7 0 11 2L10 8Q6 6 2 8z" fill="#f05018"/><path d="M12 3Q15 5 19 4L18 10Q14.5 11 11 9z" fill="#58b83a"/><path d="M2 9Q6 7 10 9L9 15Q5 13 1 15z" fill="#3a7ae8"/><path d="M11 10Q14.5 12 18 11L17 17Q13.5 18 10 16z" fill="#f8c818"/></svg>
<div class="t" style="left:34px;top:742px;font-size:17.5px;line-height:20px;font-weight:bold;font-style:italic;color:#fff;text-shadow:1px 1px 1px #1a4a1a">démarrer</div>
<div class="a" style="left:147px;top:741px;width:2px;height:22px;background:repeating-linear-gradient(#0a2a80 0,#0a2a80 1px,#5a9af8 1px,#5a9af8 2px,transparent 2px,transparent 3px)"></div>
<div class="a" style="left:342px;top:741px;width:2px;height:22px;background:repeating-linear-gradient(#0a2a80 0,#0a2a80 1px,#5a9af8 1px,#5a9af8 2px,transparent 2px,transparent 3px)"></div>
<svg class="a" style="left:158px;top:744px" width="16" height="16"><path d="M13 3Q9 0 5 2Q1 4 1.5 9Q2 14 7 15Q11 15.5 13 13" fill="#fffbe8" stroke="#1a4ab8" stroke-width="1.6"/><path d="M5 8Q6 5 9 5.5L12 6L10 10L7 9" fill="#c8e0ff" stroke="#1a3a98" stroke-width="1"/><path d="M7 9L4 11" stroke="#000" stroke-width="1.5"/><circle cx="14.5" cy="5" r="1.3" fill="#f87a1a"/></svg>
<svg class="a" style="left:181px;top:744px" width="16" height="16"><rect width="16" height="16" fill="#8a0a0a"/><path d="M1 12L4 9M12 2l3 1M2 5l2 1M13 13l2-1" stroke="#f8a030" stroke-width="1"/><path d="M3 14L8 2.5L13 14M5.2 9.5H10.8" stroke="#fff" stroke-width="1.8" fill="none"/></svg>
<svg class="a" style="left:204px;top:744px" width="16" height="16"><rect x="9" y="0" width="7" height="6" fill="#e81a0a"/><rect x="8" y="5" width="8" height="11" fill="#2a8a3a"/><ellipse cx="5.5" cy="4.8" rx="5" ry="4.8" fill="#fff"/><ellipse cx="5.5" cy="4.8" rx="2.3" ry="3" fill="#1a5ad8"/><path d="M8 9Q12 10 11 13Q10 16 5.5 16Q1 16 1 13Q1 10.5 4 10" fill="#fff"/><ellipse cx="5.5" cy="13.2" rx="3.6" ry="2" fill="#f8c018"/></svg>
<svg class="a" style="left:227px;top:744px" width="16" height="16" viewBox="0 0 16 16">
<g transform="translate(8.8 8.6) scale(1.2) translate(-8.2 -8.5)"><path d="M8.2 3.6c-2.9 0-5 2.1-5 5 0 2.8 2 4.8 4.9 4.8 2.1 0 3.7-1 4.4-2.7H9.6c-.4.5-.9.8-1.6.8-1.1 0-1.9-.8-2.1-2h6.8c.1-.3.1-.7.1-1 0-2.9-1.9-4.9-4.6-4.9zM5.9 7.7c.2-1.1 1-1.8 2.1-1.8s1.8.7 1.9 1.8z" fill="#40a8f4" stroke="#08306a" stroke-width=".8"/></g>
<path d="M1.6 15.2C.4 13.8 1.8 9 5.6 5.2 9.6 1.2 14.2 0 15.2 1.2 16 2.2 15.4 4 14.4 5.6" fill="none" stroke="#f4b814" stroke-width="1.9"/>
</svg>
<svg class="a" style="left:250px;top:744px" width="16" height="16"><rect x="3" y="1" width="12" height="13" fill="#fff" stroke="#8a9ab8"/><rect x="3" y="0" width="12" height="2" fill="#f8a030"/><rect x="0" y="3" width="10" height="9" fill="#f0f4ff" stroke="#2a3a8a"/><path d="M1.5 5L3 10.5L5 6.5L7 10.5L8.5 5" stroke="#1a2a9a" stroke-width="1.4" fill="none"/><path d="M2 14h12M2 15.5h12" stroke="#8a9ab8"/></svg>
<svg class="a" style="left:272px;top:744px" width="16" height="16"><circle cx="8.5" cy="8" r="7" fill="#3a6ac8" stroke="#1a3a88"/><path d="M3 3Q6 0 11 2" stroke="#9ac0f8" stroke-width="1.5" fill="none"/><path d="M1 8L9 6L14 9L12 13L3 12Z" fill="#f8e8c0" stroke="#8a6a3a"/><path d="M1 8L7 10L14 9" stroke="#8a6a3a" fill="none"/></svg>
<svg class="a" style="left:296px;top:744px" width="16" height="16"><ellipse cx="8" cy="4.5" rx="7" ry="3.5" fill="#d8d8d8" stroke="#6a6a6a"/><path d="M1 4.5v2.5Q8 11 15 7V4.5" fill="#a8a8a8" stroke="#5a5a5a"/><path d="M8 9v3" stroke="#000" stroke-width="1.2"/><rect x="0" y="12" width="16" height="2" fill="#1a1a1a"/><rect x="5.5" y="11" width="5" height="4" fill="#f8c820" stroke="#a88010" stroke-width=".8"/></svg>
<svg class="a" style="left:325px;top:744px" width="9" height="6"><path d="M1 .5L3.8 3L1 5.5M5 .5L7.8 3L5 5.5" stroke="#d0e0ff" stroke-width="1.2" fill="none"/></svg>
<div class="a" style="left:351px;top:741px;width:134px;height:23px;border-radius:3px;background:linear-gradient(#4a8af8 0,#3c80f4 3px,#3a7cf0 100%);box-shadow:inset 1px 1px 0 rgba(255,255,255,.25),inset -1px -1px 0 rgba(0,0,40,.2)"></div>
<div class="a" style="left:488px;top:741px;width:135px;height:23px;border-radius:3px;background:linear-gradient(#4a8af8 0,#3c80f4 3px,#3a7cf0 100%);box-shadow:inset 1px 1px 0 rgba(255,255,255,.25),inset -1px -1px 0 rgba(0,0,40,.2)"></div>
<div class="a" style="left:623px;top:741px;width:138px;height:23px;border-radius:3px;background:linear-gradient(#1a4ab8,#1e52c4);box-shadow:inset 1px 1px 0 rgba(255,255,255,.25),inset -1px -1px 0 rgba(0,0,40,.2)"></div>
<div class="a" style="left:763px;top:741px;width:135px;height:23px;border-radius:3px;background:linear-gradient(#4a8af8 0,#3c80f4 3px,#3a7cf0 100%);box-shadow:inset 1px 1px 0 rgba(255,255,255,.25),inset -1px -1px 0 rgba(0,0,40,.2)"></div>
<div class="a" style="left:361px;top:745px;width:16px;height:16px;background:linear-gradient(#fff,#c8d8f0);border:1px solid #8aa0c8"></div><div class="t" style="left:363px;top:746px;font-size:11px;font-weight:bold;font-style:italic;color:#2a4ab8">W</div>
<div class="t" style="left:379px;top:746px;font-size:11px;letter-spacing:0.3px;color:#fff"><span style="color:#f8d84a">3</span> Microsoft Off...</div>
<svg class="a" style="left:478px;top:752px" width="6" height="4"><path d="M0 0h6L3 4z" fill="#fff"/></svg>
<svg class="a" style="left:495px;top:745px" width="16" height="16"><circle cx="8.5" cy="8" r="7" fill="#3a6ac8" stroke="#1a3a88"/><path d="M3 3Q6 0 11 2" stroke="#9ac0f8" stroke-width="1.5" fill="none"/><path d="M1 8L9 6L14 9L12 13L3 12Z" fill="#f8e8c0" stroke="#8a6a3a"/><path d="M1 8L7 10L14 9" stroke="#8a6a3a" fill="none"/></svg>
<div class="t" style="left:515px;top:746px;font-size:11px;letter-spacing:0.2px;color:#fff"><span style="color:#f8d84a">2</span> Mozilla Thund...</div>
<svg class="a" style="left:614px;top:752px" width="6" height="4"><path d="M0 0h6L3 4z" fill="#fff"/></svg>
<svg class="a" style="left:634px;top:745px" width="17" height="17" viewBox="0 0 16 16">
<g transform="translate(8.8 8.6) scale(1.2) translate(-8.2 -8.5)"><path d="M8.2 3.6c-2.9 0-5 2.1-5 5 0 2.8 2 4.8 4.9 4.8 2.1 0 3.7-1 4.4-2.7H9.6c-.4.5-.9.8-1.6.8-1.1 0-1.9-.8-2.1-2h6.8c.1-.3.1-.7.1-1 0-2.9-1.9-4.9-4.6-4.9zM5.9 7.7c.2-1.1 1-1.8 2.1-1.8s1.8.7 1.9 1.8z" fill="#40a8f4" stroke="#08306a" stroke-width=".8"/></g>
<path d="M1.6 15.2C.4 13.8 1.8 9 5.6 5.2 9.6 1.2 14.2 0 15.2 1.2 16 2.2 15.4 4 14.4 5.6" fill="none" stroke="#f4b814" stroke-width="1.9"/>
</svg>
<div class="t" style="left:654px;top:746px;font-size:11px;letter-spacing:0.4px;color:#fff">http://www.secu...</div>
<svg class="a" style="left:770px;top:745px" width="17" height="15"><path d="M1 3H6L7.5 4.5H15V13H1z" fill="#e8b840" stroke="#a87a10"/><path d="M1.5 6H15.5L14 13.5H1z" fill="#f8dc78" stroke="#b88a20" stroke-width=".8"/></svg>
<div class="t" style="left:791px;top:746px;font-size:11px;letter-spacing:0.15px;color:#fff">Auditions Godefr...</div>
<div class="a" style="left:912px;top:738px;width:112px;height:29px;background:linear-gradient(#20a8f8 0,#1298f0 2px,#0e90ec 100%);border-left:1px solid #0a3a98"></div>
<div class="a" style="left:904px;top:743px;width:18px;height:18px;border-radius:50%;background:radial-gradient(circle at 40% 30%,#8ac4ff 0,#2a8af0 50%,#1a5ad0 100%);border:1px solid #5a6a9a"></div>
<svg class="a" style="left:908px;top:747px" width="10" height="10"><path d="M7 1L3 5L7 9" stroke="#fff" stroke-width="2.2" fill="none"/></svg>
<div class="a" style="left:923px;top:744px;width:16px;height:16px;background:#fff;border:1px solid #000;border-top:3px solid #e81a1a"></div>
<svg class="a" style="left:925px;top:748px" width="12" height="11"><path d="M6 1L11 5.5L6 10L1 5.5z" fill="#fff" stroke="#000" stroke-width="1.5"/></svg>
<svg class="a" style="left:941px;top:744px" width="15" height="16"><rect x="6" y="1" width="8" height="7" fill="#2a3a58" stroke="#c8d0e8"/><rect x="1" y="6" width="8" height="7" fill="#2a3a58" stroke="#c8d0e8"/><rect x="2" y="13" width="6" height="2" fill="#c8d0e8"/></svg>
<svg class="a" style="left:959px;top:745px" width="17" height="14"><path d="M1 1H16L8.5 13z" fill="#000"/><path d="M4 2.5H14L12 5H6z" fill="#1a3af8"/><path d="M7 6H11L9 9z" fill="#fff"/></svg>
<div class="t" style="left:981px;top:746px;font-size:12px;color:#fff">15:41</div>
<div class="note" style="top:201px">(1) données</div>
<div class="note" style="top:217px">provisoires</div>
<div class="note" style="top:234px">(2) données 2008</div>
<div class="note" style="top:251px">Source : Eurostat</div>
</body></html>
